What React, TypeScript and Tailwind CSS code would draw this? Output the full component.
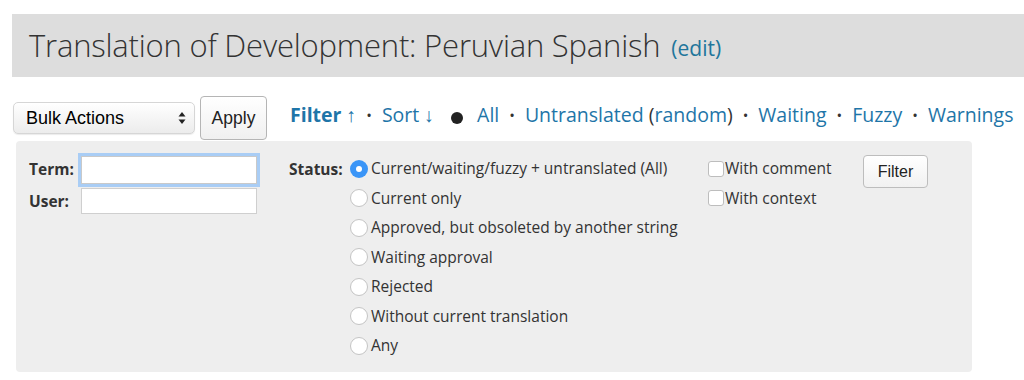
import React from "react";

const statusOptions = [
  "Current/waiting/fuzzy + untranslated (All)",
  "Current only",
  "Approved, but obsoleted by another string",
  "Waiting approval",
  "Rejected",
  "Without current translation",
  "Any",
];

function Dot() {
  return <span className="mx-[10px] text-[15px] text-[#333]">•</span>;
}

function Radio({ checked }: { checked?: boolean }) {
  if (checked) {
    return (
      <span className="flex h-[18px] w-[18px] shrink-0 items-center justify-center rounded-full bg-[#3a95f7]">
        <span className="h-[6px] w-[6px] rounded-full bg-white" />
      </span>
    );
  }
  return (
    <span className="h-[18px] w-[18px] shrink-0 rounded-full border border-[#c4c4c4] bg-white" />
  );
}

function Checkbox() {
  return <span className="h-[16px] w-[16px] shrink-0 rounded-[3px] border border-[#bdbdbd] bg-white" />;
}

export default function App() {
  const sys = { fontFamily: '"Liberation Sans", Arial, sans-serif' };

  return (
    <div
      className="h-[380px] w-[1024px] overflow-hidden bg-white text-[#333]"
      style={{ fontFamily: '"Open Sans", sans-serif' }}
    >
      {/* Page title */}
      <div className="ml-[12px] mt-[14px] flex h-[63px] items-center bg-[#dddddd] pl-[17px]">
        <h2 className="text-[31px] font-light tracking-[-0.2px] text-[#333]">
          Translation of Development: Peruvian Spanish
        </h2>
        <a href="#" className="ml-[11px] mt-[6px] text-[21px] text-[#21759b]">
          (edit)
        </a>
      </div>

      {/* Bulk actions + filter links */}
      <div className="mt-[19px] flex items-center pl-[13px]">
        <div
          className="flex h-[32px] w-[182px] items-center justify-between rounded-[5px] border border-[#d6d6d6] bg-gradient-to-b from-white to-[#ececec] pl-[12px] pr-[8px] text-[18px] text-black shadow-[0_1px_1px_rgba(0,0,0,0.08)]"
          style={sys}
        >
          <span>Bulk Actions</span>
          <svg width="8" height="14" viewBox="0 0 8 14">
            <path d="M4 1 L7.5 5.5 H0.5 Z" fill="#222" />
            <path d="M4 13 L7.5 8.5 H0.5 Z" fill="#222" />
          </svg>
        </div>
        <button
          className="ml-[5px] h-[44px] w-[67px] rounded-[4px] border border-[#b5b5b5] bg-gradient-to-b from-white to-[#f0f0f0] text-[17.5px] text-[#222]"
          style={sys}
        >
          Apply
        </button>

        <div className="-mt-[6px] ml-[23px] flex items-center text-[19.5px] text-[#1e75a8]">
          <a href="#" className="font-bold">Filter ↑</a>
          <Dot />
          <a href="#">Sort ↓</a>
          <span className="ml-[17px] mr-[14px] mt-[6px] h-[12px] w-[12px] rounded-full bg-[#222]" />
          <a href="#">All</a>
          <Dot />
          <a href="#">Untranslated</a>
          <span className="ml-[5px] text-[#333]">(</span>
          <a href="#">random</a>
          <span className="text-[#333]">)</span>
          <Dot />
          <a href="#">Waiting</a>
          <Dot />
          <a href="#">Fuzzy</a>
          <Dot />
          <a href="#">Warnings</a>
        </div>
      </div>

      {/* Filter panel */}
      <div className="ml-[16px] mt-[1px] flex h-[231px] w-[956px] rounded-[4px] bg-[#eeeeee] pl-[13px] pt-[14px] text-[15.5px]">
        <div className="flex w-[260px]">
          <div className="flex w-[52px] flex-col gap-[4px] font-bold">
            <label className="flex h-[30px] items-center">Term:</label>
            <label className="flex h-[26px] items-center">User:</label>
          </div>
          <div className="flex flex-col gap-[4px] pt-[1px]">
            <input
              className="h-[28px] w-[176px] border border-[#c9c9c9] bg-white px-[3px] outline-none ring-[3px] ring-[#a9cdf5]"
              autoFocus
            />
            <input className="h-[26px] w-[176px] border border-[#cfcfcf] bg-white outline-none" />
          </div>
        </div>

        <div className="flex w-[419px]">
          <span className="mt-[3px] w-[61px] font-bold">Status:</span>
          <div className="-mt-[1px] flex flex-col">
            {statusOptions.map((opt, i) => (
              <label key={opt} className="flex h-[29.5px] items-center gap-[3px]">
                <Radio checked={i === 0} />
                <span>{opt}</span>
              </label>
            ))}
          </div>
        </div>

        <div className="-mt-[1px] flex w-[155px] flex-col">
          <label className="flex h-[29.5px] items-center gap-[1px]">
            <Checkbox />
            <span>With comment</span>
          </label>
          <label className="flex h-[29.5px] items-center gap-[1px]">
            <Checkbox />
            <span>With context</span>
          </label>
        </div>

        <div>
          <button
            className="h-[33px] w-[65px] rounded-[4px] border border-[#bdbdbd] bg-gradient-to-b from-white to-[#f1f1f1] text-[16px] text-[#222]"
            style={sys}
          >
            Filter
          </button>
        </div>
      </div>
    </div>
  );
}
